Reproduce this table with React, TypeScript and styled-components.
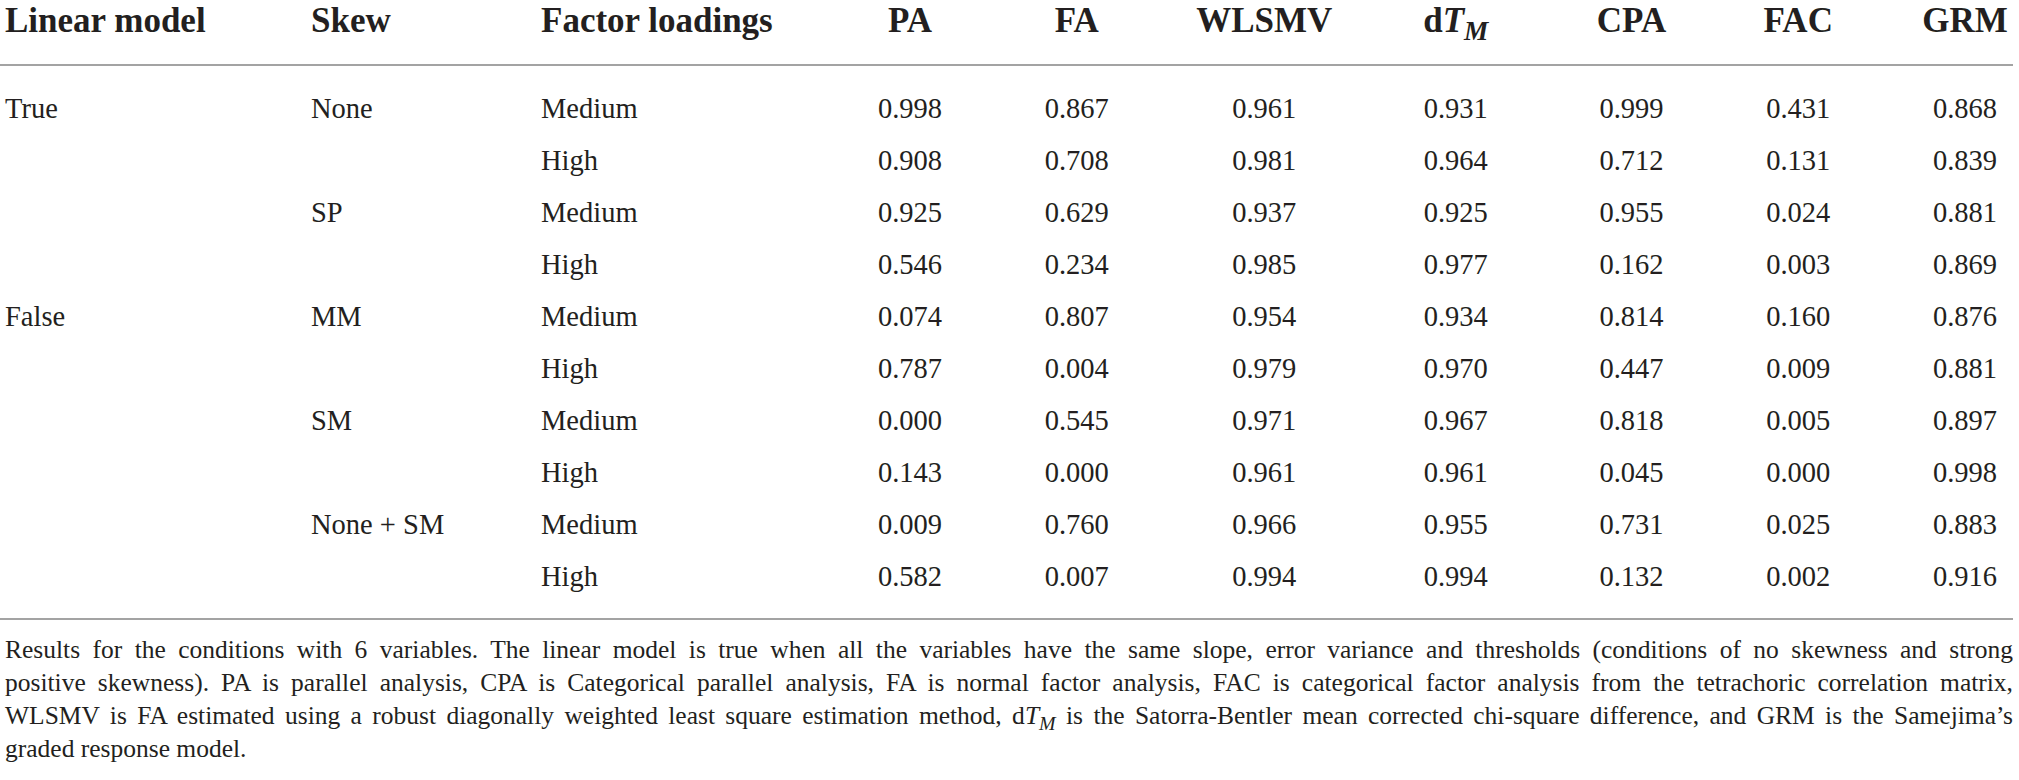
import React from "react";
import styled, { createGlobalStyle } from "styled-components";

const GlobalStyle = createGlobalStyle`
  html, body {
    margin: 0;
    padding: 0;
    background: #ffffff;
    overflow: hidden;
  }
  body {
    font-family: "Liberation Serif", "Times New Roman", serif;
    color: #231f20;
  }
`;

const COLUMNS =
  "306px 230px 290.5px 157px 176.5px 198.5px 184.5px 167px 166.5px 167px";

const Page = styled.div`
  width: 2008px;
  padding-left: 5px;
  overflow: hidden;
  font-family: "Liberation Serif", "Times New Roman", serif;
`;

const TableHead = styled.div`
  padding: 0 0 22px 5px;
  margin-left: -5px;
  border-bottom: 2px solid #a3a3a3;
`;

const TableBody = styled.div`
  padding: 17px 0 15px 5px;
  margin-left: -5px;
  border-bottom: 2px solid #a3a3a3;
`;

const Row = styled.div<{ $head?: boolean }>`
  display: grid;
  grid-template-columns: ${COLUMNS};
  font-size: ${(p) => (p.$head ? "35px" : "28.5px")};
  font-weight: ${(p) => (p.$head ? 700 : 400)};
  line-height: ${(p) => (p.$head ? "42px" : "52px")};
  height: ${(p) => (p.$head ? "42px" : "52px")};
  white-space: nowrap;
`;

const Cell = styled.div<{ $center?: boolean }>`
  text-align: ${(p) => (p.$center ? "center" : "left")};
`;

const Sub = styled.sub`
  font-size: 0.78em;
  line-height: 0;
  vertical-align: -0.28em;
  font-style: italic;
`;

const Caption = styled.div`
  margin-top: 13px;
`;

const CaptionLine = styled.div<{ $last?: boolean }>`
  display: block;
  height: 33px;
  font-size: 25.5px;
  line-height: 33px;
  white-space: nowrap;
  text-align: ${(p) => (p.$last ? "left" : "justify")};
  text-align-last: ${(p) => (p.$last ? "left" : "justify")};
`;

const DTM = () => (
  <>
    d<i>T</i>
    <Sub>M</Sub>
  </>
);

type Data = [string, string, string, string[]];

const rows: Data[] = [
  ["True", "None", "Medium", ["0.998", "0.867", "0.961", "0.931", "0.999", "0.431", "0.868"]],
  ["", "", "High", ["0.908", "0.708", "0.981", "0.964", "0.712", "0.131", "0.839"]],
  ["", "SP", "Medium", ["0.925", "0.629", "0.937", "0.925", "0.955", "0.024", "0.881"]],
  ["", "", "High", ["0.546", "0.234", "0.985", "0.977", "0.162", "0.003", "0.869"]],
  ["False", "MM", "Medium", ["0.074", "0.807", "0.954", "0.934", "0.814", "0.160", "0.876"]],
  ["", "", "High", ["0.787", "0.004", "0.979", "0.970", "0.447", "0.009", "0.881"]],
  ["", "SM", "Medium", ["0.000", "0.545", "0.971", "0.967", "0.818", "0.005", "0.897"]],
  ["", "", "High", ["0.143", "0.000", "0.961", "0.961", "0.045", "0.000", "0.998"]],
  ["", "None + SM", "Medium", ["0.009", "0.760", "0.966", "0.955", "0.731", "0.025", "0.883"]],
  ["", "", "High", ["0.582", "0.007", "0.994", "0.994", "0.132", "0.002", "0.916"]],
];

export default function App() {
  return (
    <>
      <GlobalStyle />
      <Page>
        <TableHead>
          <Row $head>
            <Cell>Linear model</Cell>
            <Cell>Skew</Cell>
            <Cell>Factor loadings</Cell>
            <Cell $center>PA</Cell>
            <Cell $center>FA</Cell>
            <Cell $center>WLSMV</Cell>
            <Cell $center>
              <DTM />
            </Cell>
            <Cell $center>CPA</Cell>
            <Cell $center>FAC</Cell>
            <Cell $center>GRM</Cell>
          </Row>
        </TableHead>
        <TableBody>
          {rows.map(([model, skew, load, vals], i) => (
            <Row key={i}>
              <Cell>{model}</Cell>
              <Cell>{skew}</Cell>
              <Cell>{load}</Cell>
              {vals.map((v, j) => (
                <Cell $center key={j}>
                  {v}
                </Cell>
              ))}
            </Row>
          ))}
        </TableBody>
        <Caption>
          <CaptionLine>
            Results for the conditions with 6 variables. The linear model is true when all the
            variables have the same slope, error variance and thresholds (conditions of no
            skewness and strong
          </CaptionLine>
          <CaptionLine>
            positive skewness). PA is parallel analysis, CPA is Categorical parallel analysis, FA
            is normal factor analysis, FAC is categorical factor analysis from the tetrachoric
            correlation matrix,
          </CaptionLine>
          <CaptionLine>
            WLSMV is FA estimated using a robust diagonally weighted least square estimation
            method, d<i>T</i>
            <Sub>M</Sub> is the Satorra-Bentler mean corrected chi-square difference, and GRM is
            the Samejima’s
          </CaptionLine>
          <CaptionLine $last>graded response model.</CaptionLine>
        </Caption>
      </Page>
    </>
  );
}
